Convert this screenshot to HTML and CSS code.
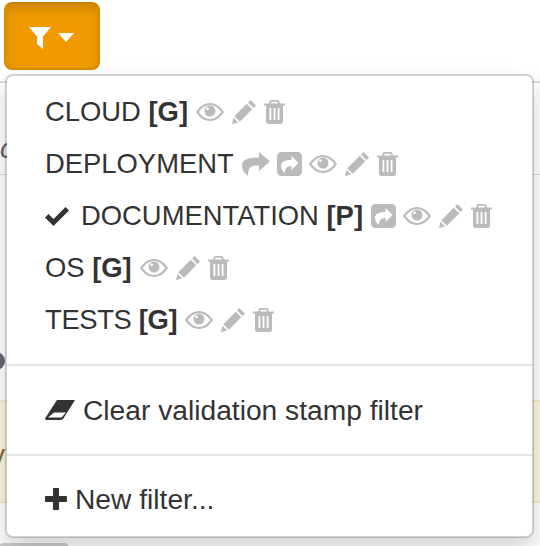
FILE: index.html
```html
<!DOCTYPE html>
<html lang="en">
<head>
  <meta charset="UTF-8" />
  <title>Validation stamp filters</title>
  <link rel="stylesheet" href="styles.css">
</head>
<body>

  <svg class="defs" width="0" height="0">
    <defs>
      <symbol id="i-eye" viewBox="0 0 28 18">
        <path fill-rule="evenodd" d="M14 0C8 0 3 4 0 9c3 5 8 9 14 9s11-4 14-9C25 4 20 0 14 0zM14 2C9.500 2 5.500 5 2.700 9c2.800 4 6.800 7 11.300 7s8.500-3 11.300-7C22.500 5 18.500 2 14 2z"/>
        <circle cx="14" cy="8" r="5.500"/>
        <circle cx="11.500" cy="5.800" r="1.400" fill="#fff"/>
      </symbol>
      <symbol id="i-pencil" viewBox="0 0 24 24">
        <path d="M18.500 0 24 5.500 21.500 8 16 2.500zM14.800 3.700 20.300 9.200 7.800 21.700 2.300 16.200zM1.500 17.800 6.200 22.500 0 24z"/>
      </symbol>
      <symbol id="i-trash" viewBox="0 0 21 24">
        <path fill-rule="evenodd" d="M7.500 0h6c1 0 1.700.7 1.900 1.600L15.900 3.500H21V5.500H19V21.500C19 23 18 24 16.500 24H4.500C3 24 2 23 2 21.500V5.500H0V3.500H5.100L5.600 1.600C5.800.7 6.500 0 7.500 0zM7.500 1.800 7.100 3.500H13.900L13.500 1.800zM5.500 8V20H7.300V8zM9.600 8V20H11.400V8zM13.700 8V20H15.500V8z"/>
      </symbol>
      <symbol id="i-share" viewBox="0 0 28 24">
        <path d="M17 0 28 9.500 17 19V13.500C10 13.500 6 14.500 6 24 2 21 0 17 0 14 0 7 7 5.500 17 5.500z"/>
      </symbol>
      <symbol id="i-share-sq" viewBox="0 0 25 24">
        <path fill-rule="evenodd" d="M4.500 0h16C23 0 25 2 25 4.500v15c0 2.500-2 4.500-4.500 4.500h-16C2 24 0 22 0 19.500v-15C0 2 2 0 4.500 0zM14.500 4V8C8.500 8 4 9.500 4 14c0 2.500 1.500 5 4 7 0-5 2-7 6.500-7v4L21.500 11z"/>
      </symbol>
    </defs>
  </svg>

  <div class="page">
    <div class="bg-rule"></div>
    <div class="bg-rule second"></div>
    <span class="bg-letter">c</span>
    <span class="bg-dot"></span>
    <div class="bg-note"><span>v</span></div>
    <div class="bg-tab"></div>

    <button class="filter-btn" type="button">
      <svg class="funnel" viewBox="0 0 22 22" width="22" height="22"><path fill="#fff" d="M0 0H22L14 9.500V22L8 17V9.500z"/></svg>
      <span class="caret"></span>
    </button>

    <ul class="menu">
      <li class="row name">
        <span>CLOUD <b>[G]</b></span>
        <svg class="ic eye first"><use href="#i-eye"/></svg>
        <svg class="ic pencil"><use href="#i-pencil"/></svg>
        <svg class="ic trash"><use href="#i-trash"/></svg>
      </li>
      <li class="row name">
        <span>DEPLOYMENT</span>
        <svg class="ic share first"><use href="#i-share"/></svg>
        <svg class="ic share-sq"><use href="#i-share-sq"/></svg>
        <svg class="ic eye"><use href="#i-eye"/></svg>
        <svg class="ic pencil"><use href="#i-pencil"/></svg>
        <svg class="ic trash"><use href="#i-trash"/></svg>
      </li>
      <li class="row name">
        <svg class="check" viewBox="0 0 24 19" width="24" height="19"><path d="M8.500 19 0 10.500 3.500 7 8.500 12 20.500 0 24 3.500z"/></svg>
        <span>DOCUMENTATION <b>[P]</b></span>
        <svg class="ic share-sq first"><use href="#i-share-sq"/></svg>
        <svg class="ic eye"><use href="#i-eye"/></svg>
        <svg class="ic pencil"><use href="#i-pencil"/></svg>
        <svg class="ic trash"><use href="#i-trash"/></svg>
      </li>
      <li class="row name">
        <span>OS <b>[G]</b></span>
        <svg class="ic eye first"><use href="#i-eye"/></svg>
        <svg class="ic pencil"><use href="#i-pencil"/></svg>
        <svg class="ic trash"><use href="#i-trash"/></svg>
      </li>
      <li class="row name">
        <span class="tight">TESTS <b>[G]</b></span>
        <svg class="ic eye first"><use href="#i-eye"/></svg>
        <svg class="ic pencil"><use href="#i-pencil"/></svg>
        <svg class="ic trash"><use href="#i-trash"/></svg>
      </li>
      <li class="divider"></li>
      <li class="row clear">
        <svg class="eraser" viewBox="0 0 30 20" width="30" height="20"><path fill-rule="evenodd" d="M12 0H30L19 17.500C18 19.300 17 20 15 20H2C.4 20-.4 19 .5 17.700zM9 12.500 3 17.500H16.500L21 12.500z"/></svg>
        <span>Clear validation stamp filter</span>
      </li>
      <li class="divider"></li>
      <li class="row add">
        <svg class="plus" viewBox="0 0 22 22" width="22" height="22"><path d="M8 1C8 .4 8.400 0 9 0h4c.6 0 1 .4 1 1V8H21c.6 0 1 .4 1 1v4c0 .6-.4 1-1 1H14V21c0 .6-.4 1-1 1H9c-.6 0-1-.4-1-1V14H1c-.6 0-1-.4-1-1V9c0-.6.4-1 1-1H8z"/></svg>
        <span>New filter...</span>
      </li>
    </ul>
  </div>

</body>
</html>
```

FILE: styles.css
```css
html, body {
  margin: 0;
  padding: 0;
}
body {
  font-family: "Liberation Sans", Arial, sans-serif;
  font-size: 28.2px;
  color: #333;
  background-color: #fff;
}
.defs {
  display: block;
  height: 0;
}
.page {
  width: 540px;
  height: 546px;
  position: relative;
  overflow: hidden;
  padding: 2px 0 0 4px;
  box-sizing: border-box;
}

/* what shows behind the open menu */
.bg-rule {
  position: absolute;
  left: 0;
  right: 0;
  top: 81px;
  height: 2px;
  background-color: #ddd;
}
.bg-rule.second {
  top: 174px;
  height: 1px;
}
.bg-letter {
  position: absolute;
  left: 0;
  top: 132px;
  color: #666;
  font-style: italic;
}
.bg-dot {
  position: absolute;
  left: -13px;
  top: 352px;
  width: 18px;
  height: 18px;
  border-radius: 50%;
  background-color: #667;
}
.bg-note {
  position: absolute;
  left: 0;
  right: 0;
  top: 400px;
  height: 103px;
  box-sizing: border-box;
  background-color: #fcf8e3;
  border-top: 2px solid #faebcc;
  border-bottom: 2px solid #faebcc;
  color: #8a6d3b;
}
.bg-note span {
  position: absolute;
  left: -9px;
  top: 36px;
}
.bg-tab {
  position: absolute;
  left: 0;
  top: 543px;
  width: 68px;
  height: 6px;
  background-color: #ccc;
  border-radius: 4px;
}

.filter-btn {
  display: flex;
  align-items: center;
  justify-content: center;
  gap: 7px;
  width: 96px;
  height: 68px;
  padding: 3px 2px 0 0;
  border: 2px solid #d98c00;
  border-top-color: #c98200;
  border-radius: 8px;
  background-color: #f09a00;
  box-shadow: inset 0 6px 10px rgba(0, 0, 0, .125);
  position: relative;
}
.caret {
  width: 0;
  height: 0;
  border-left: 8px solid transparent;
  border-right: 8px solid transparent;
  border-top: 9px solid #fff;
}

.menu {
  position: absolute;
  left: 5px;
  top: 74px;
  width: 529px;
  height: 464px;
  box-sizing: border-box;
  margin: 0;
  padding: 10px 0 0;
  list-style: none;
  background-color: #fff;
  border: 2px solid rgba(0, 0, 0, .17);
  border-radius: 8px;
  background-clip: padding-box;
  box-shadow: 0 12px 24px rgba(0, 0, 0, .175);
}
.row {
  display: flex;
  align-items: center;
  height: 52px;
  padding-left: 38px;
  white-space: nowrap;
}
.row.name {
  font-size: 27.4px;
}
.tight {
  letter-spacing: -.35px;
}
.row b {
  font-weight: bold;
}
.ic {
  fill: #bbb;
  flex: none;
}
.eye {
  width: 28px;
  height: 18px;
  margin-left: 7px;
}
.pencil {
  width: 24px;
  height: 24px;
  margin-left: 8px;
}
.trash {
  width: 21px;
  height: 24px;
  margin-left: 8px;
}
.share {
  width: 28px;
  height: 24px;
}
.share-sq {
  width: 25px;
  height: 24px;
  margin-left: 7px;
}
.ic.first {
  margin-left: 8px;
}
.check {
  fill: #333;
  margin-right: 12px;
  flex: none;
}
.divider {
  height: 2px;
  background-color: #e5e5e5;
  margin: 18px 0 0;
}
.clear {
  height: 88px;
}
.divider ~ .divider {
  margin-top: 0;
}
.add {
  height: 86px;
}
.eraser {
  fill: #333;
  margin-right: 8px;
  flex: none;
}
.plus {
  fill: #333;
  margin-right: 8px;
  flex: none;
}
```
